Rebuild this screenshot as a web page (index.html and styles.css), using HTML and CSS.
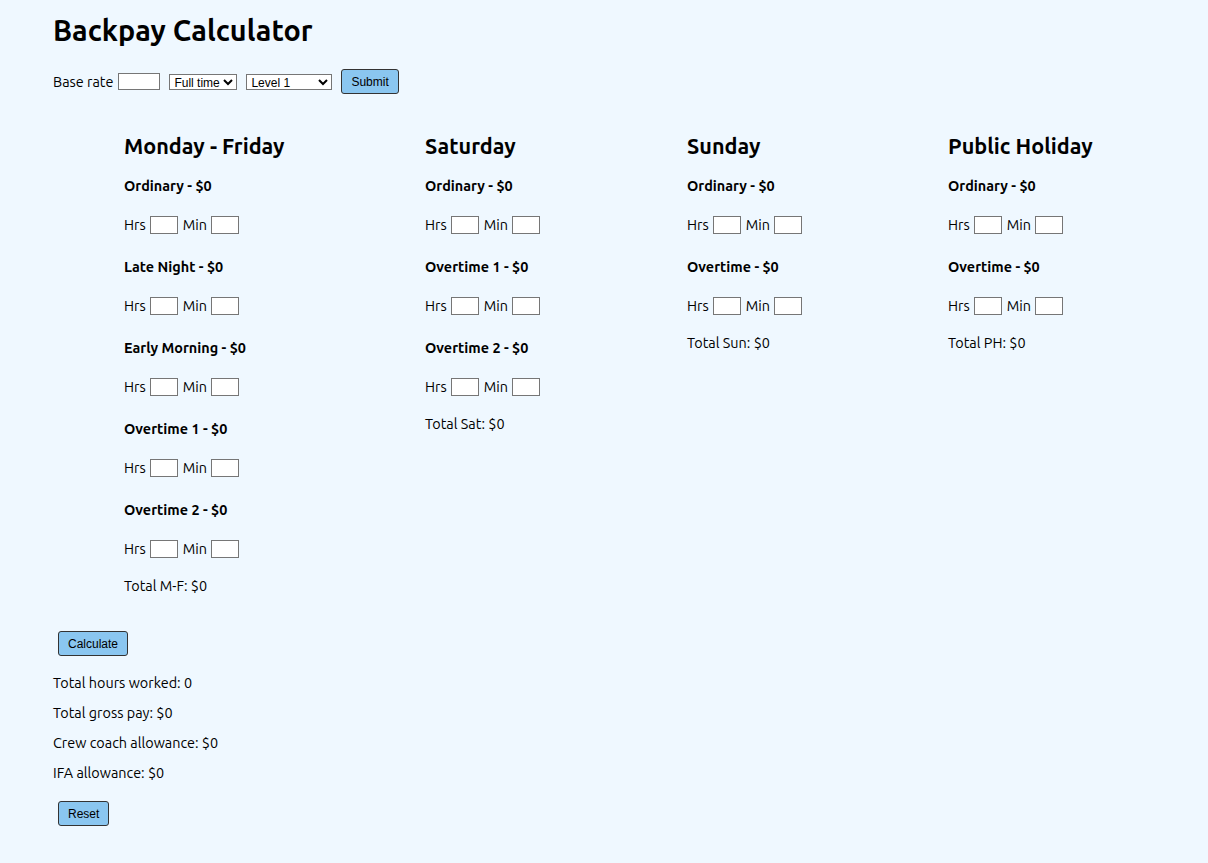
FILE: index.html
```html
<!DOCTYPE html>
<html lang="en">
<head>
<meta charset="utf-8">
<title>Backpay Calculator</title>
<link rel="stylesheet" href="styles.css">
</head>
<body>
<h1 class="title">Backpay Calculator</h1>
<form class="rate-form">
  <label>Base rate <input class="rate-input" type="text"></label>
  <select class="sel sel-type"><option>Full time</option></select>
  <select class="sel sel-level"><option>Level 1</option></select>
  <button class="btn" type="button">Submit</button>
</form>

<div class="days">
  <section class="day">
    <h2 class="day-title">Monday - Friday</h2>
    <h4 class="cat">Ordinary - $0</h4>
    <div class="hm">Hrs <input class="num" type="text"> Min <input class="num" type="text"></div>
    <h4 class="cat">Late Night - $0</h4>
    <div class="hm">Hrs <input class="num" type="text"> Min <input class="num" type="text"></div>
    <h4 class="cat">Early Morning - $0</h4>
    <div class="hm">Hrs <input class="num" type="text"> Min <input class="num" type="text"></div>
    <h4 class="cat">Overtime 1 - $0</h4>
    <div class="hm">Hrs <input class="num" type="text"> Min <input class="num" type="text"></div>
    <h4 class="cat">Overtime 2 - $0</h4>
    <div class="hm">Hrs <input class="num" type="text"> Min <input class="num" type="text"></div>
    <p class="total">Total M-F: $0</p>
  </section>
  <section class="day">
    <h2 class="day-title">Saturday</h2>
    <h4 class="cat">Ordinary - $0</h4>
    <div class="hm">Hrs <input class="num" type="text"> Min <input class="num" type="text"></div>
    <h4 class="cat">Overtime 1 - $0</h4>
    <div class="hm">Hrs <input class="num" type="text"> Min <input class="num" type="text"></div>
    <h4 class="cat">Overtime 2 - $0</h4>
    <div class="hm">Hrs <input class="num" type="text"> Min <input class="num" type="text"></div>
    <p class="total">Total Sat: $0</p>
  </section>
  <section class="day">
    <h2 class="day-title">Sunday</h2>
    <h4 class="cat">Ordinary - $0</h4>
    <div class="hm">Hrs <input class="num" type="text"> Min <input class="num" type="text"></div>
    <h4 class="cat">Overtime - $0</h4>
    <div class="hm">Hrs <input class="num" type="text"> Min <input class="num" type="text"></div>
    <p class="total">Total Sun: $0</p>
  </section>
  <section class="day">
    <h2 class="day-title">Public Holiday</h2>
    <h4 class="cat">Ordinary - $0</h4>
    <div class="hm">Hrs <input class="num" type="text"> Min <input class="num" type="text"></div>
    <h4 class="cat">Overtime - $0</h4>
    <div class="hm">Hrs <input class="num" type="text"> Min <input class="num" type="text"></div>
    <p class="total">Total PH: $0</p>
  </section>
</div>

<button class="btn btn-calc" type="button">Calculate</button>
<div class="results">
  <p class="res">Total hours worked: 0</p>
  <p class="res">Total gross pay: $0</p>
  <p class="res">Crew coach allowance: $0</p>
  <p class="res">IFA allowance: $0</p>
</div>
<button class="btn btn-reset" type="button">Reset</button>
</body>
</html>
```

FILE: styles.css
```css
html {
  background: #eff8ff;
}
body {
  margin: 0;
  padding: 0 53px 30px;
  font-family: "Ubuntu", "Open Sans", "Noto Sans", sans-serif;
  font-size: 14.4px;
  color: #000;
  background: #eff8ff;
}
.title {
  font-size: 28.8px;
  font-weight: bold;
  margin: 10px 0 19px;
  line-height: 40px;
}
.rate-form {
  display: flex;
  align-items: center;
  height: 25px;
}
.rate-form label {
  display: flex;
  align-items: center;
}
.rate-input {
  box-sizing: border-box;
  width: 42px;
  height: 17px;
  margin: 0 0 0 5px;
  border: 1px solid #767676;
  padding: 0 2px;
  background: #fff;
}
.sel {
  box-sizing: border-box;
  height: 16px;
  margin-left: 9px;
  font-family: "Liberation Sans", Arial, sans-serif;
  font-size: 12px;
  color: #000;
  border: 1px solid #767676;
  background: #fff;
  padding: 0;
  border-radius: 0;
}
.sel-type { width: 68px; }
.sel-level { width: 86px; }
.btn {
  box-sizing: border-box;
  height: 25px;
  padding: 0 9px;
  margin-left: 9px;
  background: #8ac6f0;
  border: 1px solid #333;
  border-radius: 3px;
  font-family: "Liberation Sans", Arial, sans-serif;
  font-size: 12px;
  color: #000;
}
.days {
  display: grid;
  grid-template-columns: 301px 262px 261px 1fr;
  align-items: start;
  margin-top: 37px;
  padding-left: 71px;
}
.day-title {
  font-size: 21.6px;
  font-weight: bold;
  margin: 0 0 17px;
  line-height: 30px;
}
.cat {
  font-size: 14.4px;
  font-weight: bold;
  margin: 0;
  line-height: 17px;
}
.hm {
  display: flex;
  align-items: center;
  gap: 4.5px;
  margin: 21px 0 25px;
  height: 18px;
}
.num {
  box-sizing: border-box;
  width: 28px;
  height: 18px;
  margin: 0;
  border: 1px solid #767676;
  padding: 0 2px;
  background: #fff;
}
.total {
  margin: -5px 0 0;
  line-height: 17px;
}
.btn-calc {
  display: block;
  margin: 36px 0 0 5px;
}
.results {
  margin-top: 19px;
}
.res {
  margin: 0 0 13px;
  line-height: 17px;
}
.btn-reset {
  display: block;
  margin: 19px 0 0 5px;
}
```
